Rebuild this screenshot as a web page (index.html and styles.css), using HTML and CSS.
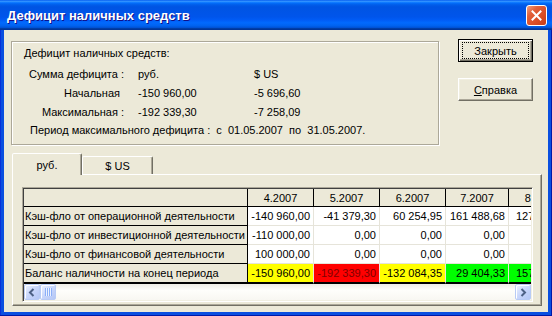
FILE: index.html
```html
<!DOCTYPE html>
<html lang="ru">
<head>
  <meta charset="UTF-8">
  <title>Дефицит наличных средств</title>
  <link rel="stylesheet" href="styles.css">
</head>
<body>

  <div class="window">
    <div class="titlebar">
      <span class="title">Дефицит наличных средств</span>
      <button class="close" aria-label="Закрыть окно">
        <svg width="11" height="11" viewBox="0 0 11 11"><path d="M1.5 1.5 L9.5 9.5 M9.5 1.5 L1.5 9.5" stroke="#fff" stroke-width="2" stroke-linecap="square"/></svg>
      </button>
    </div>

    <div class="client">
      <div class="top">
        <div class="groupbox">
          <div class="caption">Дефицит наличных средств:</div>
          <div class="row"><span class="lbl">Сумма дефицита :</span><span>руб.</span><span>$ US</span></div>
          <div class="row"><span class="lbl short">Начальная</span><span>-150 960,00</span><span>-5 696,60</span></div>
          <div class="row"><span class="lbl">Максимальная :</span><span>-192 339,30</span><span>-7 258,09</span></div>
          <div class="period">Период максимального дефицита :  с  01.05.2007  по  31.05.2007.</div>
        </div>
        <div class="buttons">
          <button class="btn default"><span class="focus">Закрыть</span></button>
          <button class="btn"><u>С</u>правка</button>
        </div>
      </div>

      <div class="tabs">
        <div class="tab active">руб.</div>
        <div class="tab">$ US</div>
      </div>

      <div class="panel">
        <div class="grid">
          <div class="grid-view">
            <table>
              <thead>
                <tr>
                  <th class="c0"></th>
                  <th class="c1">4.2007</th>
                  <th class="c1">5.2007</th>
                  <th class="c1">6.2007</th>
                  <th class="c2">7.2007</th>
                  <th class="c1">8.2007</th>
                </tr>
              </thead>
              <tbody>
                <tr>
                  <td class="fixed">Кэш-фло от операционной деятельности</td>
                  <td>-140 960,00</td>
                  <td>-41 379,30</td>
                  <td>60 254,95</td>
                  <td>161 488,68</td>
                  <td>127 953,98</td>
                </tr>
                <tr>
                  <td class="fixed">Кэш-фло от инвестиционной деятельности</td>
                  <td>-110 000,00</td>
                  <td>0,00</td>
                  <td>0,00</td>
                  <td>0,00</td>
                  <td>0,00</td>
                </tr>
                <tr>
                  <td class="fixed">Кэш-фло от финансовой деятельности</td>
                  <td>100 000,00</td>
                  <td>0,00</td>
                  <td>0,00</td>
                  <td>0,00</td>
                  <td>0,00</td>
                </tr>
                <tr class="balance">
                  <td class="fixed">Баланс наличности на конец периода</td>
                  <td class="warn">-150 960,00</td>
                  <td class="bad">-192 339,30</td>
                  <td class="warn">-132 084,35</td>
                  <td class="ok">29 404,33</td>
                  <td class="ok">157 358,31</td>
                </tr>
              </tbody>
            </table>
          </div>
          <div class="scrollbar">
            <span class="sb-btn">
              <svg width="8" height="9" viewBox="0 0 8 9"><path d="M5.5 1 L2 4.5 L5.5 8" stroke="#4d6185" stroke-width="2" fill="none"/></svg>
            </span>
            <span class="sb-thumb"><span class="grip"></span></span>
            <span class="sb-track"></span>
            <span class="sb-btn">
              <svg width="8" height="9" viewBox="0 0 8 9"><path d="M2.5 1 L6 4.5 L2.5 8" stroke="#4d6185" stroke-width="2" fill="none"/></svg>
            </span>
          </div>
        </div>
      </div>
    </div>
  </div>

</body>
</html>
```

FILE: styles.css
```css
* {
  box-sizing: border-box;
}

body {
  margin: 0;
  background: #fff;
  font-family: 'Liberation Sans', Arial, sans-serif;
  font-size: 11px;
  color: #000;
}

.window {
  width: 552px;
  height: 316px;
  display: flex;
  flex-direction: column;
  background: #0a4fe0;
  box-shadow: inset -1px -1px #0019a8, inset 1px 0 #0831d9;
}

/* title bar */
.titlebar {
  height: 30px;
  flex: none;
  display: flex;
  align-items: center;
  justify-content: space-between;
  background: linear-gradient(to bottom, #0058ee 0%, #3593ff 4%, #288eff 6%, #127dff 8%, #036ffc 10%, #0262ee 14%, #0057e5 20%, #0054e3 24%, #0055eb 56%, #005bf5 66%, #026afe 76%, #0062ef 86%, #0052d6 92%, #0040ab 94%, #003092 100%);
}

.title {
  padding-left: 7px;
  color: #fff;
  font-weight: bold;
  font-size: 13px;
  text-shadow: 1px 1px #0f1089;
}

.close {
  width: 21px;
  height: 21px;
  margin-right: 5px;
  padding: 0;
  display: flex;
  align-items: center;
  justify-content: center;
  border: 1px solid #fff;
  border-radius: 3px;
  background: linear-gradient(135deg, #f0a080 0%, #e2603a 30%, #d84a22 70%, #c53d18 100%);
}

/* client area */
.client {
  flex: 1;
  margin: 0 4px 4px;
  padding: 11px 0 0 7px;
  background: #ece9d8;
}

.top {
  display: flex;
}

.groupbox {
  width: 428px;
  height: 104px;
  padding-top: 1px;
  border: 1px solid #aca899;
  box-shadow: inset 1px 1px #fff, 1px 1px #fff;
}

.caption {
  height: 21px;
  line-height: 21px;
  padding-left: 12px;
}

.row {
  display: grid;
  grid-template-columns: 112px 102px auto;
  column-gap: 14px;
  height: 19px;
  align-items: center;
}

.lbl {
  text-align: right;
}

.lbl.short {
  padding-right: 4px;
}

.period {
  height: 19px;
  line-height: 19px;
  padding-left: 18px;
  white-space: pre;
}

.buttons {
  display: flex;
  flex-direction: column;
  gap: 16px;
  margin: -2px 0 0 19px;
}

.btn {
  width: 75px;
  height: 23px;
  padding: 0;
  font-family: inherit;
  font-size: 11px;
  color: #000;
  background: #ece9d8;
  border: 1px solid;
  border-color: #fff #716f64 #716f64 #fff;
  box-shadow: inset -1px -1px #aca899, inset 1px 1px #f1efe2;
}

.btn.default {
  border: 1px solid #000;
  padding: 2px 3px;
  box-shadow: inset 1px 1px #fff, inset -1px -1px #716f64, inset -2px -2px #aca899;
}

.focus {
  display: flex;
  align-items: center;
  justify-content: center;
  height: 100%;
  border: 1px dotted #000;
}

/* tabs */
.tabs {
  display: flex;
  align-items: flex-end;
  height: 21px;
  margin: 8px 0 0 1px;
}

.tab {
  width: 71px;
  height: 18px;
  display: flex;
  align-items: center;
  justify-content: center;
  border: 1px solid;
  border-bottom: 0;
  border-color: #fff #716f64 transparent #fff;
  border-radius: 2px 2px 0 0;
  box-shadow: inset -1px 0 #aca899;
}

.tab.active {
  width: 70px;
  height: 22px;
  margin-bottom: -1px;
  padding: 1px 0 0;
  position: relative;
  z-index: 1;
  background: #ece9d8;
}

.panel {
  width: 530px;
  height: 132px;
  margin-left: 1px;
  padding: 12px 0 0 9px;
  border: 1px solid;
  border-color: #fff #716f64 #716f64 #fff;
  box-shadow: inset -1px -1px #aca899;
}

/* string grid */
.grid {
  width: 511px;
  height: 115px;
  padding: 1px;
  border: 1px solid;
  border-color: #aca899 #fff #fff #aca899;
  box-shadow: inset 1px 1px #404040, inset -1px -1px #f1efe2;
}

.grid-view {
  height: 95px;
  overflow: hidden;
  background: #fff;
}

table {
  table-layout: fixed;
  width: 551px;
  border-collapse: separate;
  border-spacing: 0;
}

th {
  height: 18px;
  padding: 0;
  font-weight: normal;
  text-align: center;
  background: #ece9d8;
  border-right: 1px solid #000;
  border-bottom: 1px solid #000;
}

th.c0 { width: 224px; }
th.c1 { width: 66px; }
th.c2 { width: 63px; }

td {
  height: 19px;
  padding: 0 3px 0 0;
  line-height: 13px;
  text-align: right;
  white-space: nowrap;
  overflow: hidden;
  background: #fff;
  border-right: 1px solid #e6e4da;
  border-bottom: 1px solid #e6e4da;
}

td.fixed {
  padding: 0 0 0 1px;
  text-align: left;
  background: #ece9d8;
  border-right-color: #000;
  border-bottom-color: #000;
}

.balance td {
  height: 20px;
  border-bottom: 2px solid #000;
}

.warn { background: #ffff00; }
.bad { background: #ff0000; color: #800000; }
.ok { background: #00ff00; }

/* scrollbar */
.scrollbar {
  display: flex;
  height: 16px;
  background: linear-gradient(to bottom, #eeede5, #fefefb 40%, #f8f7f2);
}

.sb-btn,
.sb-thumb {
  width: 16px;
  height: 16px;
  display: flex;
  align-items: center;
  justify-content: center;
  border: 1px solid #b8cbf5;
  border-radius: 2px;
  background: linear-gradient(135deg, #eef3fe, #c8d6fb 50%, #b4c7f5);
  box-shadow: inset 1px 1px #fff;
}

.sb-track {
  flex: 1;
}

.grip {
  width: 7px;
  height: 8px;
  background: repeating-linear-gradient(to right, #8cb0f8 0 1px, #eef3fe 1px 2px);
}
```
